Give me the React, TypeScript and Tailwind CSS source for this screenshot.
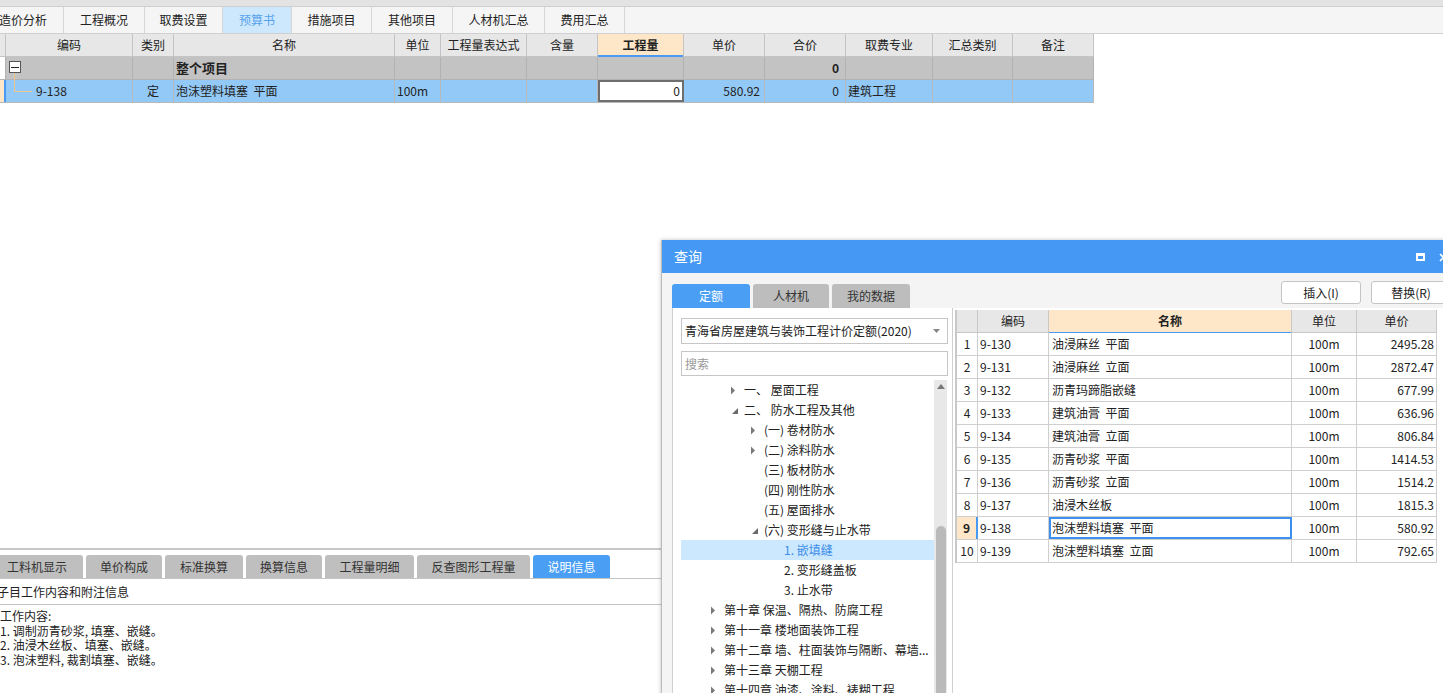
import React from 'react';

type Col = { label: string; w: number; hl?: boolean };

const topTabs = [
  { label: '造价分析', w: 81 },
  { label: '工程概况', w: 81 },
  { label: '取费设置', w: 78 },
  { label: '预算书', w: 69, active: true },
  { label: '措施项目', w: 80 },
  { label: '其他项目', w: 81 },
  { label: '人材机汇总', w: 92 },
  { label: '费用汇总', w: 80 },
];

const mainCols: Col[] = [
  { label: '编码', w: 127 },
  { label: '类别', w: 41 },
  { label: '名称', w: 221 },
  { label: '单位', w: 46 },
  { label: '工程量表达式', w: 86 },
  { label: '含量', w: 71 },
  { label: '工程量', w: 86, hl: true },
  { label: '单价', w: 81 },
  { label: '合价', w: 81 },
  { label: '取费专业', w: 87 },
  { label: '汇总类别', w: 80 },
  { label: '备注', w: 81 },
];

const bottomTabs = [
  { label: '工料机显示', w: 92 },
  { label: '单价构成', w: 76 },
  { label: '标准换算', w: 78 },
  { label: '换算信息', w: 76 },
  { label: '工程量明细', w: 89 },
  { label: '反查图形工程量', w: 113 },
  { label: '说明信息', w: 77, active: true },
];

type TreeItem = { level: number; arrow?: 'right' | 'down'; text: string; selected?: boolean };

const tree: TreeItem[] = [
  { level: 1, arrow: 'right', text: '一、 屋面工程' },
  { level: 1, arrow: 'down', text: '二、 防水工程及其他' },
  { level: 2, arrow: 'right', text: '(一) 卷材防水' },
  { level: 2, arrow: 'right', text: '(二) 涂料防水' },
  { level: 2, text: '(三) 板材防水' },
  { level: 2, text: '(四) 刚性防水' },
  { level: 2, text: '(五) 屋面排水' },
  { level: 2, arrow: 'down', text: '(六) 变形缝与止水带' },
  { level: 3, text: '1. 嵌填缝', selected: true },
  { level: 3, text: '2. 变形缝盖板' },
  { level: 3, text: '3. 止水带' },
  { level: 0, arrow: 'right', text: '第十章 保温、隔热、防腐工程' },
  { level: 0, arrow: 'right', text: '第十一章 楼地面装饰工程' },
  { level: 0, arrow: 'right', text: '第十二章 墙、柱面装饰与隔断、幕墙...' },
  { level: 0, arrow: 'right', text: '第十三章 天棚工程' },
  { level: 0, arrow: 'right', text: '第十四章 油漆、涂料、裱糊工程' },
];

const quotas = [
  ['9-130', '油浸麻丝 平面', '2495.28'],
  ['9-131', '油浸麻丝 立面', '2872.47'],
  ['9-132', '沥青玛蹄脂嵌缝', '677.99'],
  ['9-133', '建筑油膏 平面', '636.96'],
  ['9-134', '建筑油膏 立面', '806.84'],
  ['9-135', '沥青砂浆 平面', '1414.53'],
  ['9-136', '沥青砂浆 立面', '1514.2'],
  ['9-137', '油浸木丝板', '1815.3'],
  ['9-138', '泡沫塑料填塞 平面', '580.92'],
  ['9-139', '泡沫塑料填塞 立面', '792.65'],
];

function Arrow({ dir }: { dir?: 'right' | 'down' }) {
  if (dir === 'right')
    return (
      <svg width="6" height="9" viewBox="0 0 6 9" className="ml-[2px]">
        <path d="M1 0.5 L5 4.5 L1 8.5 Z" fill="#7a7a7a" />
      </svg>
    );
  if (dir === 'down')
    return (
      <svg width="8" height="8" viewBox="0 0 8 8" className="ml-[3px] mt-[2px]">
        <path d="M7 1 L7 7 L1 7 Z" fill="#6a6a6a" />
      </svg>
    );
  return null;
}

function MainTable() {
  return (
    <div className="w-[1094px] text-[12px] text-[#222]">
      {/* header */}
      <div className="flex h-[23px] bg-[#e7e7e7] border-b border-[#c4c4c4]">
        <div className="w-[6px] border-r border-[#c4c4c4]" />
        {mainCols.map((c) => (
          <div
            key={c.label}
            style={{ width: c.w }}
            className={
              c.hl
                ? 'relative flex items-center justify-center border-r border-[#c4c4c4] bg-[#fde7c8] font-bold'
                : 'flex items-center justify-center border-r border-[#c4c4c4]'
            }
          >
            {c.label}
            {c.hl && <div className="absolute bottom-[-1px] left-0 right-0 h-[2px] bg-[#4a9af5]" />}
          </div>
        ))}
      </div>
      {/* group row */}
      <div className="flex h-[23px] bg-[#c3c3c3] border-b border-[#b2b2b2]">
        <div className="w-[6px] bg-white border-r border-[#b2b2b2]" />
        <div className="relative w-[127px] border-r border-[#b2b2b2]">
          <div className="absolute left-[3px] top-[4px] w-[12px] h-[12px] bg-white border border-[#555] flex items-center justify-center">
            <div className="w-[8px] h-[1px] bg-[#222]" />
          </div>
          <div className="absolute left-[8px] top-[16px] bottom-[-1px] w-[1px] bg-[#f0c58d]" />
        </div>
        <div className="w-[41px] border-r border-[#b2b2b2]" />
        <div className="w-[221px] border-r border-[#b2b2b2] flex items-center pl-[2px] font-bold text-[13px]">
          整个项目
        </div>
        <div className="w-[46px] border-r border-[#b2b2b2]" />
        <div className="w-[86px] border-r border-[#b2b2b2]" />
        <div className="w-[71px] border-r border-[#b2b2b2]" />
        <div className="w-[86px] border-r border-[#b2b2b2]" />
        <div className="w-[81px] border-r border-[#b2b2b2]" />
        <div className="w-[81px] border-r border-[#b2b2b2] flex items-center justify-end pr-[6px] font-bold">0</div>
        <div className="w-[87px] border-r border-[#b2b2b2]" />
        <div className="w-[80px] border-r border-[#b2b2b2]" />
        <div className="w-[81px] border-r border-[#b2b2b2]" />
      </div>
      {/* item row */}
      <div className="flex h-[23px] bg-[#93c9f6] border-b border-[#b8b8b8]">
        <div className="w-[6px] bg-[#fde7c8] border-r-2 border-[#4a9af5]" />
        <div className="relative w-[127px] border-r border-[#b8b8b8] flex items-center pl-[30px]">
          <div className="absolute left-[8px] top-0 h-[11px] w-[1px] bg-[#f0c58d]" />
          <div className="absolute left-[8px] top-[11px] h-[1px] w-[18px] bg-[#f0c58d]" />
          9-138
        </div>
        <div className="w-[41px] border-r border-[#b8b8b8] flex items-center justify-center">定</div>
        <div className="w-[221px] border-r border-[#b8b8b8] flex items-center pl-[2px] whitespace-pre">泡沫塑料填塞  平面</div>
        <div className="w-[46px] border-r border-[#b8b8b8] flex items-center pl-[2px]">100m</div>
        <div className="w-[86px] border-r border-[#b8b8b8]" />
        <div className="w-[71px] border-r border-[#b8b8b8]" />
        <div className="w-[86px] bg-white border-2 border-[#6e6e6e] flex items-center justify-end pr-[2px]">0</div>
        <div className="w-[81px] border-r border-[#b8b8b8] flex items-center justify-end pr-[4px]">580.92</div>
        <div className="w-[81px] border-r border-[#b8b8b8] flex items-center justify-end pr-[6px]">0</div>
        <div className="w-[87px] border-r border-[#b8b8b8] flex items-center pl-[2px]">建筑工程</div>
        <div className="w-[80px] border-r border-[#b8b8b8]" />
        <div className="w-[81px] border-r border-[#b8b8b8]" />
      </div>
    </div>
  );
}

function BottomPanel() {
  return (
    <div className="border-t-2 border-[#c8c8c8] text-[12px] text-[#222]">
      <div className="flex gap-[3px] pt-[5px] border-b border-[#c4c4c4]">
        {bottomTabs.map((t, i) => (
          <div
            key={t.label}
            style={{ width: t.w }}
            className={
              (i === 0 ? '-ml-[9px] ' : '') +
              (t.active
                ? 'h-[23px] rounded-t-[3px] bg-[#4a9ff5] text-white flex items-center justify-center'
                : 'h-[23px] rounded-t-[3px] bg-[#bfbfbf] text-[#333] flex items-center justify-center')
            }
          >
            {t.label}
          </div>
        ))}
      </div>
      <div className="h-[26px] flex items-center border-b border-[#c4c4c4] -ml-[3px]">
        子目工作内容和附注信息
      </div>
      <div className="pt-[4px] leading-[14.5px]">
        <div>工作内容:</div>
        <div>1. 调制沥青砂浆, 填塞、嵌缝。</div>
        <div>2. 油浸木丝板、填塞、嵌缝。</div>
        <div>3. 泡沫塑料, 裁割填塞、嵌缝。</div>
      </div>
    </div>
  );
}

function QueryDialog() {
  return (
    <div className="absolute left-[661px] top-[240px] w-[800px] h-[460px] flex flex-col bg-[#f4f4f4] border-l border-[#bcbcbc] shadow-[0_0_4px_rgba(0,0,0,0.25)] text-[12px] text-[#222]">
      <div className="relative h-[33px] bg-[#4599f5] flex items-center pl-[12px] text-white text-[14px]">
        查询
        <div className="absolute left-[754px] top-[13px] w-[9px] h-[8px] border-2 border-t-[3px] border-white" />
        <svg className="absolute left-[777px] top-[13px]" width="9" height="9" viewBox="0 0 9 9">
          <path d="M1 1 L8 8 M8 1 L1 8" stroke="white" strokeWidth="1.6" />
        </svg>
      </div>
      <div className="h-[35px] flex items-end pl-[10px]">
        <div className="flex gap-[3px]">
          <div className="w-[78px] h-[24px] rounded-t-[3px] bg-[#4a9ff5] text-white flex items-center justify-center">定额</div>
          <div className="w-[76px] h-[24px] rounded-t-[3px] bg-[#bdbdbd] text-[#333] flex items-center justify-center">人材机</div>
          <div className="w-[78px] h-[24px] rounded-t-[3px] bg-[#bdbdbd] text-[#333] flex items-center justify-center">我的数据</div>
        </div>
        <div className="ml-auto flex gap-[10px] mb-[4px] mr-[10px]">
          <div className="w-[80px] h-[23px] bg-white border border-[#c4c4c4] rounded-[3px] flex items-center justify-center">插入(I)</div>
          <div className="w-[80px] h-[23px] bg-white border border-[#c4c4c4] rounded-[3px] flex items-center justify-center">替换(R)</div>
        </div>
      </div>
      <div className="flex flex-1 min-h-0">
        {/* left pane */}
        <div className="ml-[10px] w-[281px] bg-white border-l border-r border-[#cfcfcf] pt-[10px] pl-[8px] flex flex-col">
          <div className="w-[267px] h-[26px] border border-[#c6c6c6] flex items-center pl-[3px] text-[#222]">
            青海省房屋建筑与装饰工程计价定额(2020)
            <svg className="ml-auto mr-[7px]" width="7" height="4" viewBox="0 0 7 4">
              <path d="M0 0 L7 0 L3.5 4 Z" fill="#888" />
            </svg>
          </div>
          <div className="mt-[7px] w-[267px] h-[25px] border border-[#c6c6c6] flex items-center pl-[3px] text-[#9a9a9a]">
            搜索
          </div>
          <div className="mt-[4px] flex flex-1 min-h-0">
            <div className="w-[253px] overflow-hidden">
              {tree.map((t) => (
                <div
                  key={t.text}
                  style={{ paddingLeft: 27 + t.level * 20 }}
                  className={
                    t.selected
                      ? 'h-[20px] flex items-center bg-[#cce8ff] text-[#3b8de8] whitespace-nowrap'
                      : 'h-[20px] flex items-center text-[#222] whitespace-nowrap'
                  }
                >
                  <div className="w-[16px] shrink-0 flex items-center">
                    <Arrow dir={t.arrow} />
                  </div>
                  <span className="whitespace-pre">{t.text}</span>
                </div>
              ))}
            </div>
            <div className="w-[13px] bg-[#e8e8e8] flex flex-col items-center">
              <svg className="mt-[4px]" width="8" height="5" viewBox="0 0 8 5">
                <path d="M0 5 L8 5 L4 0 Z" fill="#777" />
              </svg>
              <div className="mt-[137px] w-[10px] flex-1 bg-[#bababa] rounded-t-full" />
            </div>
          </div>
        </div>
        {/* right pane */}
        <div className="flex-1 bg-white pl-[2px] pt-[2px]">
          <div className="w-[482px] border-l-2 border-[#c8c8c8]">
            <div className="flex h-[23px] bg-[#e7e7e7] border-b border-[#c8c8c8]">
              <div className="w-[21px] border-r border-[#c8c8c8]" />
              <div className="w-[71px] border-r border-[#c8c8c8] flex items-center justify-center">编码</div>
              <div className="relative w-[243px] border-r border-[#c8c8c8] bg-[#fde7c8] flex items-center justify-center font-bold">
                名称
                <div className="absolute bottom-[-1px] left-0 right-0 h-[1px] bg-[#4a9af5]" />
              </div>
              <div className="w-[65px] border-r border-[#c8c8c8] flex items-center justify-center">单位</div>
              <div className="w-[80px] border-r border-[#c8c8c8] flex items-center justify-center">单价</div>
            </div>
            {quotas.map((q, i) => {
              const sel = i === 8;
              return (
                <div key={q[0]} className="flex h-[23px] border-b border-[#cfcfcf]">
                  <div
                    className={
                      sel
                        ? 'w-[21px] bg-[#fde7c8] border-r-2 border-[#4a9af5] flex items-center justify-center font-bold'
                        : 'w-[21px] border-r border-[#cfcfcf] flex items-center justify-center'
                    }
                  >
                    {i + 1}
                  </div>
                  <div className="w-[71px] border-r border-[#cfcfcf] flex items-center pl-[2px]">{q[0]}</div>
                  <div
                    className={
                      sel
                        ? 'w-[243px] border-2 border-[#3d8ff0] flex items-center pl-[1px] whitespace-pre'
                        : 'w-[243px] border-r border-[#cfcfcf] flex items-center pl-[3px] whitespace-pre'
                    }
                  >
                    {q[1].replace(' ', '  ')}
                  </div>
                  <div className="w-[65px] border-r border-[#cfcfcf] flex items-center justify-center">100m</div>
                  <div className="w-[80px] border-r border-[#cfcfcf] flex items-center justify-end pr-[2px]">{q[2]}</div>
                </div>
              );
            })}
          </div>
        </div>
      </div>
    </div>
  );
}

export default function App() {
  return (
    <div className="relative w-[1443px] h-[693px] overflow-hidden bg-white font-['Noto_Sans_CJK_SC','Noto_Sans',sans-serif]">
      <div className="h-[7px] bg-[#e3e3e3] border-b border-[#d0d0d0]" />
      <div className="flex h-[27px] bg-[#f5f5f5] border-b border-[#d0d0d0] text-[12px] text-[#222]">
        {topTabs.map((t, i) => (
          <div
            key={t.label}
            style={{ width: t.w }}
            className={
              (i === 0 ? '-ml-[17px] ' : '') +
              (t.active
                ? 'flex items-center justify-center border-r border-[#d6d6d6] bg-[#cde8fd] text-[#58a2ec]'
                : 'flex items-center justify-center border-r border-[#d6d6d6]')
            }
          >
            {t.label}
          </div>
        ))}
      </div>
      <MainTable />
      <div className="h-[445px]" />
      <BottomPanel />
      <QueryDialog />
    </div>
  );
}
